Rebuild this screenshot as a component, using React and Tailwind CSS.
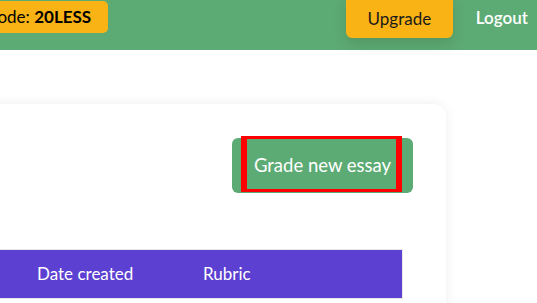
export default function App() {
  const font = { fontFamily: "Lato, 'Noto Sans', sans-serif" };
  return (
    <div className="w-full h-[303px] overflow-hidden bg-white" style={font}>
      {/* Top bar */}
      <header className="relative z-10 h-[50px] bg-[#5dab74] flex items-start justify-between">
        <div className="ml-[-76px] mt-[1px] h-[32px] pl-[12px] pr-[17px] flex items-center rounded-[5px] bg-[#f9b315] text-[17px] text-black whitespace-nowrap">
          Promo code:&nbsp;<span className="font-bold">20LESS</span>
        </div>
        <div className="flex items-start">
          <button className="mt-[-6px] h-[44px] w-[107px] pt-[6px] rounded-[6px] bg-[#f9b315] text-[17px] text-[#1a1a1a] shadow-[0_6px_14px_rgba(0,0,0,0.12)]">
            Upgrade
          </button>
          <a className="ml-[23px] mr-[9px] mt-[5px] text-[17px] font-semibold text-white">Logout</a>
        </div>
      </header>

      {/* Card */}
      <div className="ml-[-120px] w-[566px] mt-[54px] h-[260px] rounded-[12px] bg-white shadow-[0_0_12px_rgba(0,0,0,0.07)] flex flex-col">
        <div className="flex justify-end pr-[33px] pt-[34px]">
          <button className="relative h-[55px] w-[181px] rounded-[6px] bg-[#5dab74] text-[18.5px] text-white">
            Grade new essay
            <span className="absolute left-[9px] top-[-2px] w-[161px] h-[56px] border-x-[6px] border-y-[3px] border-[#ff0000]" />
          </button>
        </div>
        <div className="mt-[56px] mr-[43px] border border-[#e8e8e8]">
          <div className="grid grid-cols-[156px_166px_1fr] h-[48px] items-center bg-[#5c40d1] text-[17px] text-white">
            <div className="pl-4">Title</div>
            <div>Date created</div>
            <div>Rubric</div>
          </div>
        </div>
      </div>
    </div>
  );
}
